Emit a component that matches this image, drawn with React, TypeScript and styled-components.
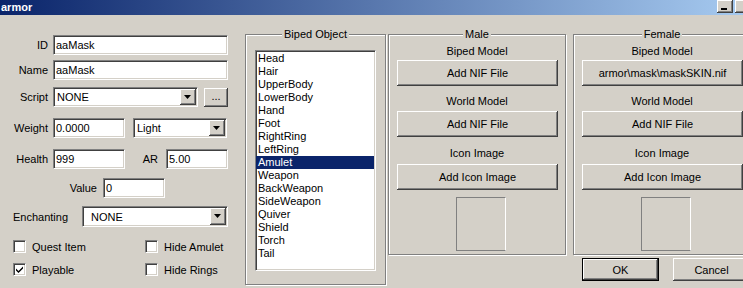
import styled, { createGlobalStyle } from 'styled-components';

const GlobalStyle = createGlobalStyle`
  html, body {
    margin: 0;
    padding: 0;
    background: #d4d0c8;
  }
  body {
    font-family: "Liberation Sans", Arial, sans-serif;
    font-size: 11px;
    color: #000000;
  }
  * {
    box-sizing: border-box;
  }
`;

const Window = styled.div`
  width: 743px;
  height: 288px;
  overflow: hidden;
  background: #d4d0c8;
  display: flex;
  flex-direction: column;
`;

const TitleBar = styled.div`
  height: 15px;
  flex-shrink: 0;
  display: flex;
  align-items: flex-start;
  background: linear-gradient(to right, #0a246a, #a6caf0);
  color: #ffffff;
  font-weight: bold;
  font-size: 11px;
`;

const TitleText = styled.span`
  line-height: 14px;
  padding-left: 1px;
`;

const TitleButtons = styled.div`
  margin-left: auto;
  margin-right: -8px;
  display: flex;
  gap: 2px;
`;

const TitleButton = styled.div`
  width: 16px;
  height: 13px;
  background: #d4d0c8;
  box-shadow: inset -1px -1px #404040, inset 1px 1px #ffffff, inset -2px -2px #808080;
  position: relative;
`;

const MinGlyph = styled.span`
  position: absolute;
  left: 4px;
  bottom: 3px;
  width: 6px;
  height: 2px;
  background: #000000;
`;

const Body = styled.div`
  display: flex;
  align-items: flex-start;
  padding-top: 19px;
`;

const LeftForm = styled.div`
  width: 245px;
  flex-shrink: 0;
  display: flex;
  flex-direction: column;
`;

const Row = styled.div<{ $mt: number; $h?: number; $pl?: number }>`
  display: flex;
  align-items: center;
  margin-top: ${(p) => p.$mt}px;
  height: ${(p) => p.$h ?? 20}px;
  padding-left: ${(p) => p.$pl ?? 0}px;
`;

const Label = styled.span<{ $w: number; $left?: boolean }>`
  width: ${(p) => p.$w}px;
  flex-shrink: 0;
  text-align: ${(p) => (p.$left ? 'left' : 'right')};
  white-space: nowrap;
`;

const sunken = `
  border: 1px solid;
  border-color: #808080 #ffffff #ffffff #808080;
  box-shadow: inset 1px 1px #404040, inset -1px -1px #d4d0c8;
`;

const raised = `
  background: #d4d0c8;
  box-shadow: inset -1px -1px #404040, inset 1px 1px #ffffff, inset -2px -2px #808080;
`;

const TextBox = styled.div<{ $w: number; $ml: number }>`
  ${sunken}
  width: ${(p) => p.$w}px;
  height: 20px;
  margin-left: ${(p) => p.$ml}px;
  background: #ffffff;
  padding-left: 2px;
  line-height: 18px;
  white-space: nowrap;
`;

const Combo = styled.div<{ $w: number; $ml: number; $h?: number; $indent?: number }>`
  ${sunken}
  width: ${(p) => p.$w}px;
  height: ${(p) => p.$h ?? 20}px;
  margin-left: ${(p) => p.$ml}px;
  background: #ffffff;
  display: flex;
  align-items: center;
  padding: 1px 1px 1px ${(p) => p.$indent ?? 3}px;
`;

const ComboText = styled.span`
  flex: 1;
  white-space: nowrap;
`;

const ComboArrow = styled.div`
  ${raised}
  width: 16px;
  height: 100%;
  display: flex;
  align-items: center;
  justify-content: center;
  padding: 0 1px 1px 0;
`;

const SmallButton = styled.div`
  ${raised}
  width: 24px;
  height: 19px;
  margin-left: 6px;
  display: flex;
  align-items: center;
  justify-content: center;
  line-height: 1;
  padding-bottom: 2px;
`;

const CheckItem = styled.div<{ $w: number }>`
  width: ${(p) => p.$w}px;
  display: flex;
  align-items: center;
  gap: 6px;
`;

const CheckBox = styled.div`
  ${sunken}
  width: 13px;
  height: 13px;
  background: #ffffff;
  display: flex;
  align-items: center;
  justify-content: center;
`;

const Group = styled.div<{ $w: number; $h: number }>`
  width: ${(p) => p.$w}px;
  height: ${(p) => p.$h}px;
  border: 1px solid #808080;
  box-shadow: 1px 1px 0 #ffffff, inset 1px 1px 0 #ffffff;
  display: flex;
  flex-direction: column;
  flex-shrink: 0;
`;

const GroupTitle = styled.div`
  margin: -7px auto 0;
  padding: 0 2px;
  background: #d4d0c8;
  line-height: 13px;
  width: fit-content;
`;

const ListBox = styled.div`
  ${sunken}
  width: 121px;
  height: 221px;
  margin: 9px 0 0 9px;
  background: #ffffff;
  padding: 1px 1px 1px 0;
`;

const ListItem = styled.div<{ $selected?: boolean }>`
  height: 13px;
  line-height: 13px;
  padding-left: 2px;
  background: ${(p) => (p.$selected ? '#0a246a' : 'transparent')};
  color: ${(p) => (p.$selected ? '#ffffff' : '#000000')};
`;

const SubLabel = styled.div<{ $mt: number }>`
  margin-top: ${(p) => p.$mt}px;
  line-height: 12px;
  text-align: center;
`;

const PushButton = styled.div<{ $mt: number }>`
  ${raised}
  width: 161px;
  height: 26px;
  margin: ${(p) => p.$mt}px 0 0 8px;
  display: flex;
  align-items: center;
  justify-content: center;
  white-space: nowrap;
`;

const ImageBox = styled.div`
  width: 50px;
  height: 54px;
  margin: 7px 0 0 67px;
  border: 1px solid;
  border-color: #808080 #ffffff #808080 #808080;
`;

const Column = styled.div<{ $ml: number }>`
  display: flex;
  flex-direction: column;
  flex-shrink: 0;
  margin-left: ${(p) => p.$ml}px;
`;

const ButtonRow = styled.div`
  display: flex;
  gap: 14px;
  margin-top: 3px;
  padding-left: 9px;
`;

const DialogButton = styled.div<{ $default?: boolean }>`
  ${raised}
  width: 77px;
  height: 23px;
  display: flex;
  align-items: center;
  justify-content: center;
  ${(p) =>
    p.$default &&
    `
    border: 1px solid #000000;
  `}
`;

const Arrow = () => (
  <svg width="7" height="4" viewBox="0 0 7 4">
    <path d="M0 0h7L3.5 4z" fill="#000" />
  </svg>
);

const Check = () => (
  <svg width="9" height="9" viewBox="0 0 9 9">
    <path d="M1 3.5l2.5 2.5L8 1.5v2L3.5 8 1 5.5z" fill="#000" />
  </svg>
);

const bipedParts = [
  'Head',
  'Hair',
  'UpperBody',
  'LowerBody',
  'Hand',
  'Foot',
  'RightRing',
  'LeftRing',
  'Amulet',
  'Weapon',
  'BackWeapon',
  'SideWeapon',
  'Quiver',
  'Shield',
  'Torch',
  'Tail',
];

const ModelGroup = ({ title, biped }: { title: string; biped: string }) => (
  <Group $w={178} $h={221}>
    <GroupTitle>{title}</GroupTitle>
    <SubLabel $mt={4}>Biped Model</SubLabel>
    <PushButton $mt={3}>{biped}</PushButton>
    <SubLabel $mt={9}>World Model</SubLabel>
    <PushButton $mt={4}>Add NIF File</PushButton>
    <SubLabel $mt={10}>Icon Image</SubLabel>
    <PushButton $mt={5}>Add Icon Image</PushButton>
    <ImageBox />
  </Group>
);

export default function App() {
  return (
    <>
      <GlobalStyle />
      <Window>
        <TitleBar>
          <TitleText>armor</TitleText>
          <TitleButtons>
            <TitleButton>
              <MinGlyph />
            </TitleButton>
            <TitleButton />
          </TitleButtons>
        </TitleBar>
        <Body>
          <LeftForm>
            <Row $mt={1}>
              <Label $w={48}>ID</Label>
              <TextBox $w={175} $ml={5}>aaMask</TextBox>
            </Row>
            <Row $mt={5}>
              <Label $w={48}>Name</Label>
              <TextBox $w={175} $ml={5}>aaMask</TextBox>
            </Row>
            <Row $mt={7}>
              <Label $w={48}>Script</Label>
              <Combo $w={145} $ml={5}>
                <ComboText>NONE</ComboText>
                <ComboArrow>
                  <Arrow />
                </ComboArrow>
              </Combo>
              <SmallButton>...</SmallButton>
            </Row>
            <Row $mt={11}>
              <Label $w={48}>Weight</Label>
              <TextBox $w={72} $ml={5}>0.0000</TextBox>
              <Combo $w={94} $ml={8}>
                <ComboText>Light</ComboText>
                <ComboArrow>
                  <Arrow />
                </ComboArrow>
              </Combo>
            </Row>
            <Row $mt={11}>
              <Label $w={48}>Health</Label>
              <TextBox $w={72} $ml={5}>999</TextBox>
              <Label $w={33}>AR</Label>
              <TextBox $w={62} $ml={8}>5.00</TextBox>
            </Row>
            <Row $mt={9}>
              <Label $w={97}>Value</Label>
              <TextBox $w={62} $ml={6}>0</TextBox>
            </Row>
            <Row $mt={8} $h={21} $pl={13}>
              <Label $w={69} $left>
                Enchanting
              </Label>
              <Combo $w={146} $ml={0} $h={21} $indent={8}>
                <ComboText>NONE</ComboText>
                <ComboArrow>
                  <Arrow />
                </ComboArrow>
              </Combo>
            </Row>
            <Row $mt={13} $h={13} $pl={13}>
              <CheckItem $w={132}>
                <CheckBox />
                <span>Quest Item</span>
              </CheckItem>
              <CheckItem $w={100}>
                <CheckBox />
                <span>Hide Amulet</span>
              </CheckItem>
            </Row>
            <Row $mt={10} $h={13} $pl={13}>
              <CheckItem $w={132}>
                <CheckBox>
                  <Check />
                </CheckBox>
                <span>Playable</span>
              </CheckItem>
              <CheckItem $w={100}>
                <CheckBox />
                <span>Hide Rings</span>
              </CheckItem>
            </Row>
          </LeftForm>

          <Group $w={141} $h={251}>
            <GroupTitle>Biped Object</GroupTitle>
            <ListBox>
              {bipedParts.map((part) => (
                <ListItem key={part} $selected={part === 'Amulet'}>
                  {part}
                </ListItem>
              ))}
            </ListBox>
          </Group>

          <Column $ml={2}>
            <ModelGroup title="Male" biped="Add NIF File" />
          </Column>

          <Column $ml={7}>
            <ModelGroup title="Female" biped="armor\mask\maskSKIN.nif" />
            <ButtonRow>
              <DialogButton $default>OK</DialogButton>
              <DialogButton>Cancel</DialogButton>
            </ButtonRow>
          </Column>
        </Body>
      </Window>
    </>
  );
}
